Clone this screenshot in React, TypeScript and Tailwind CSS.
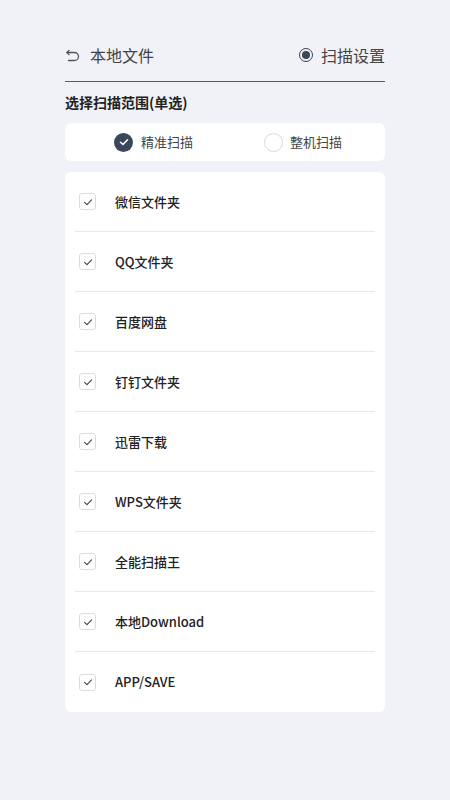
import React from 'react';

const folders = [
  '微信文件夹',
  'QQ文件夹',
  '百度网盘',
  '钉钉文件夹',
  '迅雷下载',
  'WPS文件夹',
  '全能扫描王',
  '本地Download',
  'APP/SAVE',
];

const font = { fontFamily: '"Noto Sans CJK SC", "Noto Sans", sans-serif' };

const BackIcon = () => (
  <svg width="16" height="16" viewBox="0 0 16 16" fill="none" stroke="#555" strokeWidth="1.3" strokeLinecap="round" strokeLinejoin="round">
    <path d="M4 3.5 L2 5.5 L4 7.5" />
    <path d="M2 5.5 H9.5 A4 4 0 0 1 9.5 13.5 H3.5" />
  </svg>
);

const SmallCheck = () => (
  <svg width="10" height="10" viewBox="0 0 10 10" fill="none" stroke="#444" strokeWidth="1.1" strokeLinecap="round" strokeLinejoin="round">
    <path d="M1.5 5.3 L4 7.6 L8.6 2.8" />
  </svg>
);

export default function App() {
  return (
    <div className="min-h-[800px] w-full bg-[#f1f2f7]" style={font}>
      <div className="mx-auto w-[320px] pt-[41px]">
        {/* Header */}
        <div className="flex h-[28px] items-center justify-between">
          <div className="flex items-center gap-[9px]">
            <BackIcon />
            <span className="text-[16px] text-[#444]">本地文件</span>
          </div>
          <div className="flex items-center gap-[8px]">
            <span className="flex h-[14px] w-[14px] items-center justify-center rounded-full border-[1.5px] border-[#3b4656]">
              <span className="h-[8px] w-[8px] rounded-full bg-[#3b4656]" />
            </span>
            <span className="text-[16px] text-[#444]">扫描设置</span>
          </div>
        </div>
        <div className="mt-[12px] h-px bg-[#5a5a5a]" />

        <div className="mt-[10px] text-[14px] font-bold leading-[20px] text-[#222]">选择扫描范围(单选)</div>

        {/* Scan mode */}
        <div className="mt-[11px] flex h-[38px] items-center rounded-[6px] bg-white pl-[49px]">
          <div className="flex w-[150px] items-center gap-[8px]">
            <span className="flex h-[19px] w-[19px] items-center justify-center rounded-full bg-[#38475c]">
              <svg width="10" height="10" viewBox="0 0 10 10" fill="none" stroke="white" strokeWidth="1.5" strokeLinecap="round" strokeLinejoin="round">
                <path d="M1.5 5.2 L4 7.5 L8.5 2.8" />
              </svg>
            </span>
            <span className="text-[13px] text-[#444]">精准扫描</span>
          </div>
          <div className="flex items-center gap-[7px]">
            <span className="h-[19px] w-[19px] rounded-full border border-[#d8d8d8]" />
            <span className="text-[13px] text-[#444]">整机扫描</span>
          </div>
        </div>

        {/* Folder list */}
        <div className="mt-[11px] rounded-[6px] bg-white px-[10px]">
          {folders.map((name, i) => (
            <div
              key={name}
              className={`flex h-[60px] items-center ${i < folders.length - 1 ? 'border-b border-[#e8e9ec]' : ''}`}
            >
              <span className="ml-[4px] flex h-[17px] w-[17px] items-center justify-center rounded-[3px] border border-[#dcdcdc]">
                <SmallCheck />
              </span>
              <span className="ml-[19px] text-[13px] font-medium text-[#222]">{name}</span>
            </div>
          ))}
        </div>
      </div>
    </div>
  );
}
